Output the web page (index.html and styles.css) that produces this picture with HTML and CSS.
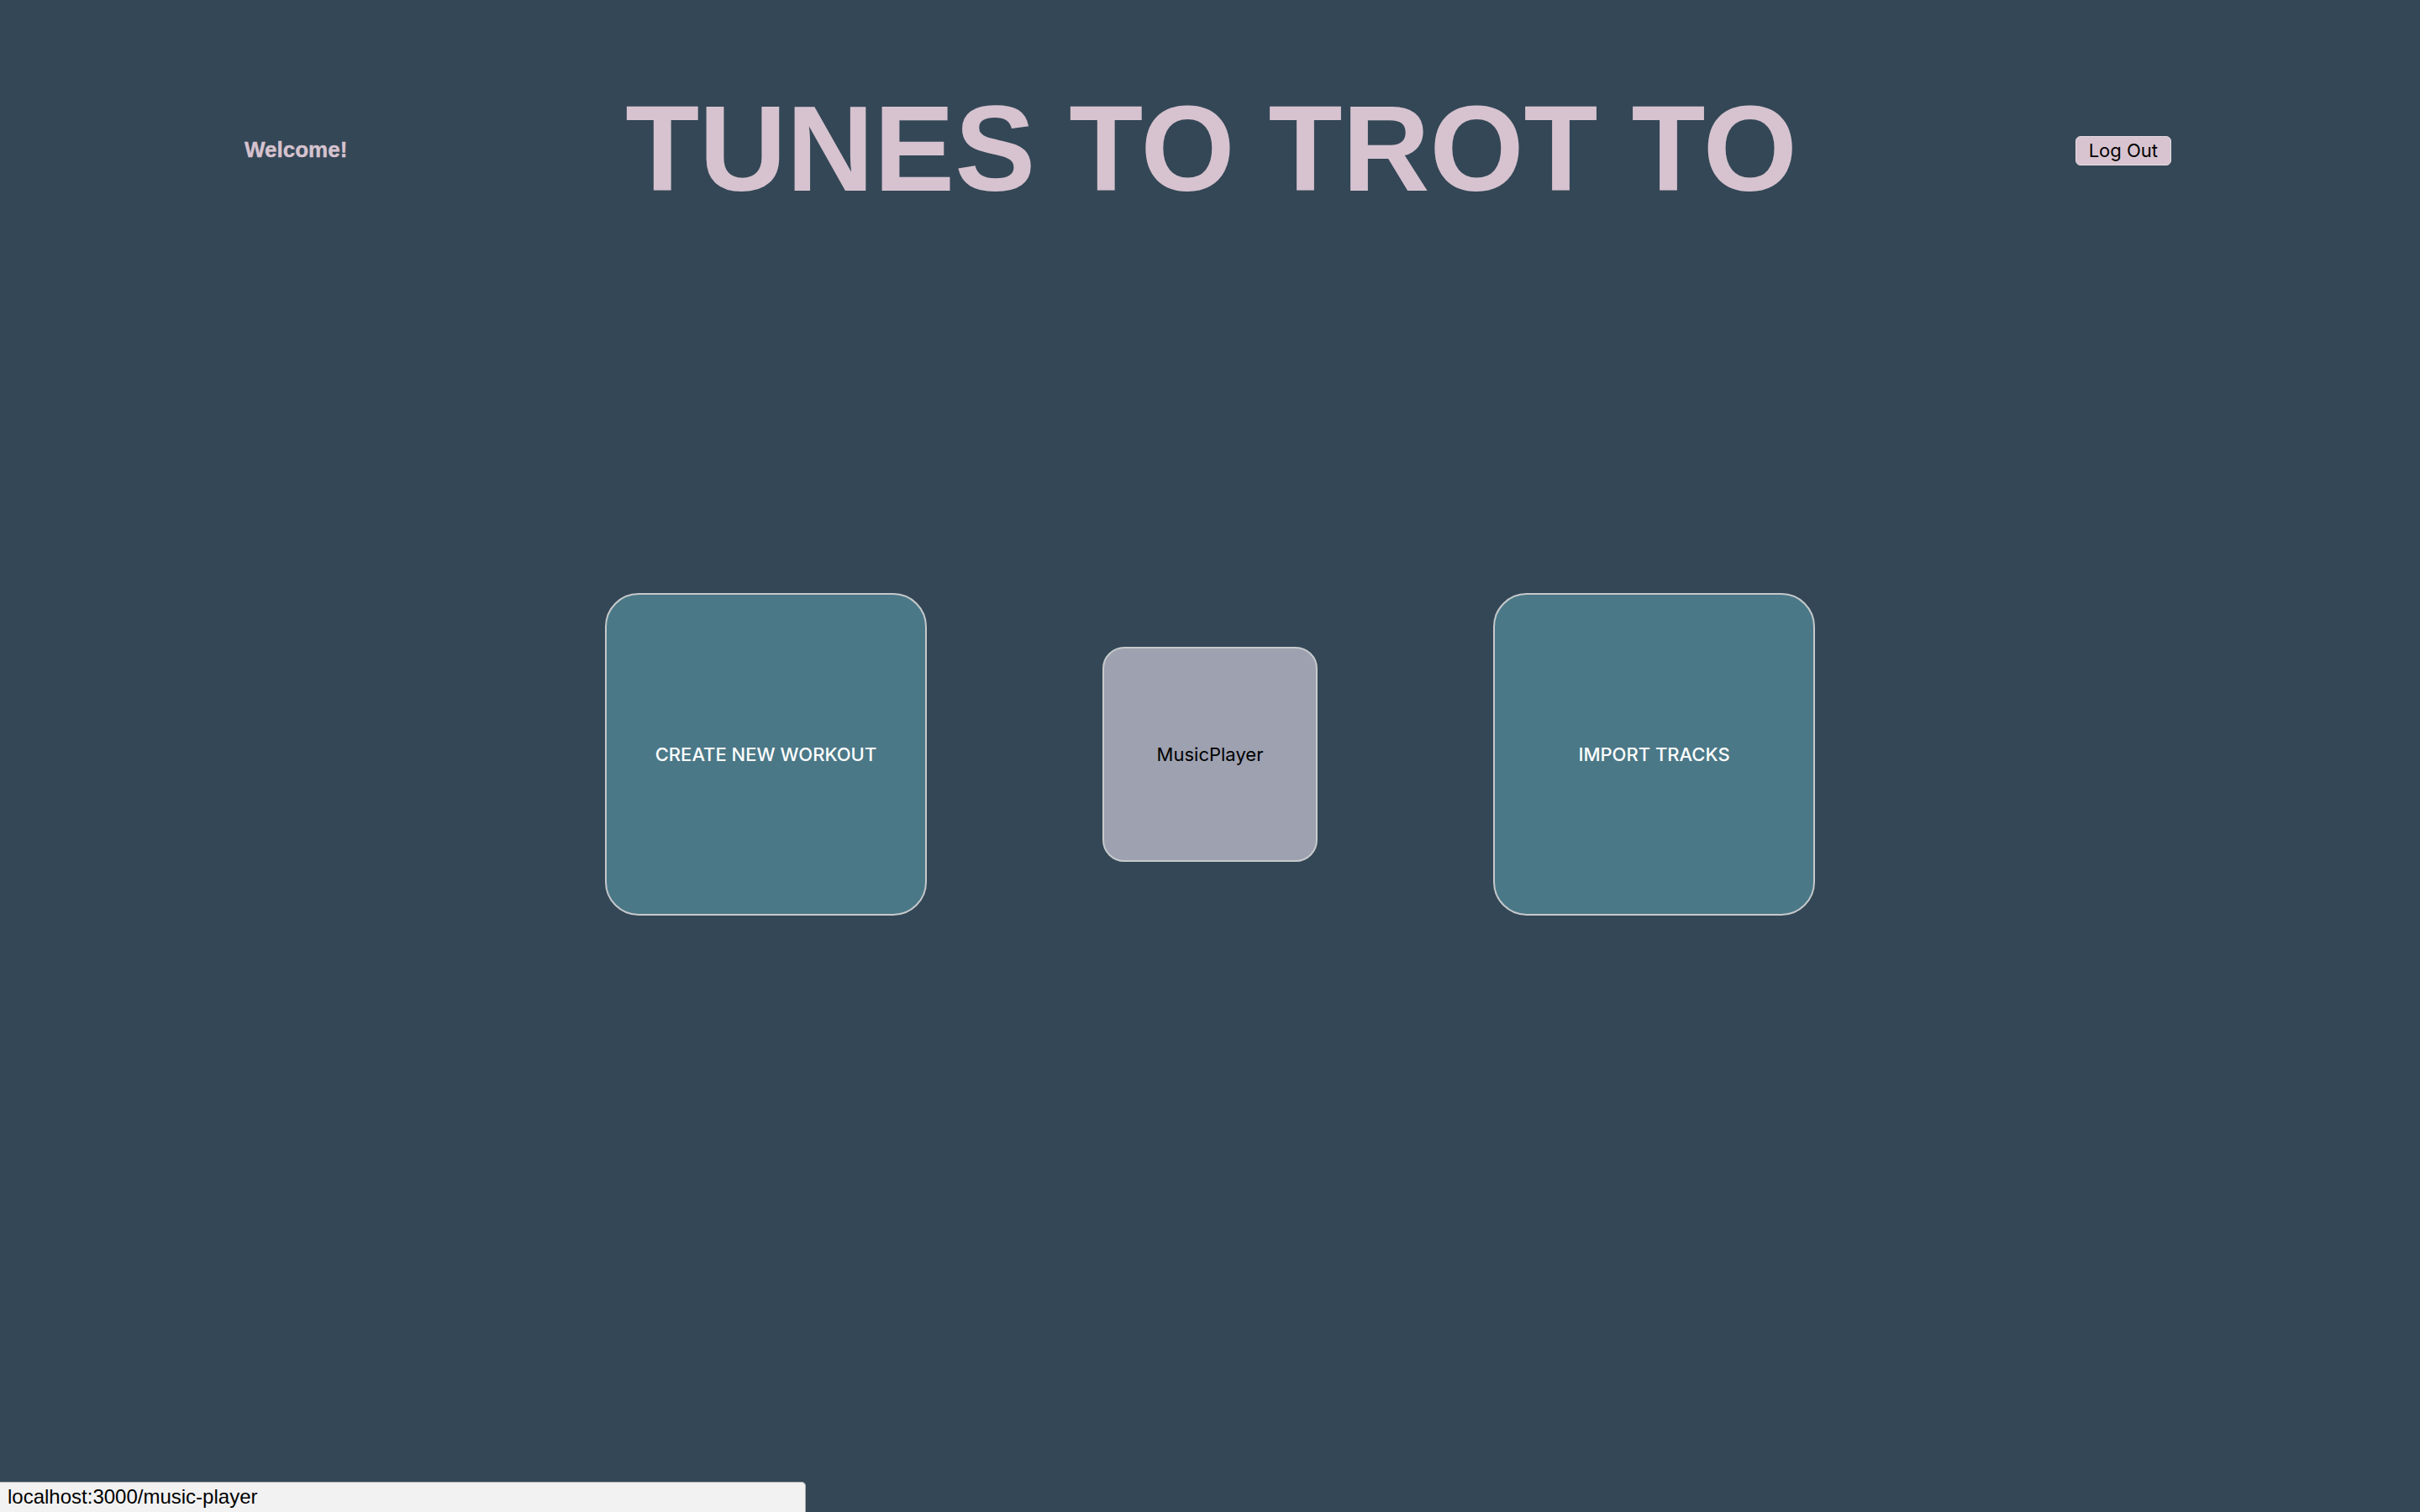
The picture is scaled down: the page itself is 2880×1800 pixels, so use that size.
FILE: index.html
```html
<!DOCTYPE html>
<html lang="en">
<head>
<meta charset="utf-8">
<title>Tunes to Trot To</title>
<link rel="stylesheet" href="styles.css">
</head>
<body>
  <div class="page">
    <header class="header">
      <div class="welcome">Welcome!</div>
      <h1 class="title">TUNES TO TROT TO</h1>
      <div class="actions"><button class="logout">Log Out</button></div>
    </header>
    <main class="main">
      <div class="cards">
        <a class="card card-big">CREATE NEW WORKOUT</a>
        <a class="card card-small">MusicPlayer</a>
        <a class="card card-big">IMPORT TRACKS</a>
      </div>
    </main>
  </div>
  <div class="statusbar">localhost:3000/music-player</div>
</body>
</html>
```
FILE: styles.css
```css
html, body {
  margin: 0;
  padding: 0;
}
body {
  background: #344756;
  font-family: "Inter", "Liberation Sans", sans-serif;
  height: 100vh;
  overflow: hidden;
}
.page {
  display: flex;
  flex-direction: column;
  height: 100vh;
}
.header {
  display: grid;
  grid-template-columns: 1fr auto 1fr;
  align-items: center;
  padding: 106px 296px 0 291px;
}
.welcome {
  justify-self: start;
  font-family: "Liberation Sans", Arial, sans-serif;
  font-weight: bold;
  font-size: 26px;
  color: #d6c3cf;
  -webkit-text-stroke: 0.4px #d6c3cf;
}
.title {
  margin: 0;
  padding-left: 8px;
  font-family: "Liberation Sans", Arial, sans-serif;
  font-weight: bold;
  font-size: 144px;
  line-height: 144px;
  color: #d6c3cf;
  white-space: nowrap;
}
.actions {
  justify-self: end;
  padding-top: 3px;
}
.logout {
  height: 35px;
  padding: 0 15px;
  background: #d8c4d0;
  border: 1px solid #e2dbe0;
  border-radius: 6px;
  font-family: "Inter", "Liberation Sans", sans-serif;
  font-size: 22px;
  color: #000;
  line-height: 33px;
}
.main {
  flex: 1;
  display: flex;
  align-items: center;
  justify-content: center;
  padding-bottom: 255px;
}
.cards {
  display: flex;
  align-items: center;
  gap: 209px;
}
.card {
  box-sizing: border-box;
  display: flex;
  align-items: center;
  justify-content: center;
  border: 2px solid #c6c9cb;
  font-size: 22px;
  text-decoration: none;
}
.card-big {
  width: 383px;
  height: 384px;
  border-radius: 40px;
  background: #4b7887;
  color: #ffffff;
  font-weight: 500;
}
.card-small {
  width: 256px;
  height: 256px;
  border-radius: 26px;
  background: #9ea1b0;
  color: #000000;
}
.statusbar {
  position: fixed;
  left: 0;
  bottom: 0;
  box-sizing: border-box;
  width: 959px;
  height: 36px;
  padding: 2px 0 0 9px;
  background: #f2f2f2;
  border-top: 1px solid #b0b0b0;
  border-right: 1px solid #b0b0b0;
  border-top-right-radius: 5px;
  font-family: "Liberation Sans", Arial, sans-serif;
  font-size: 24px;
  line-height: 30px;
  color: #000;
}
```
